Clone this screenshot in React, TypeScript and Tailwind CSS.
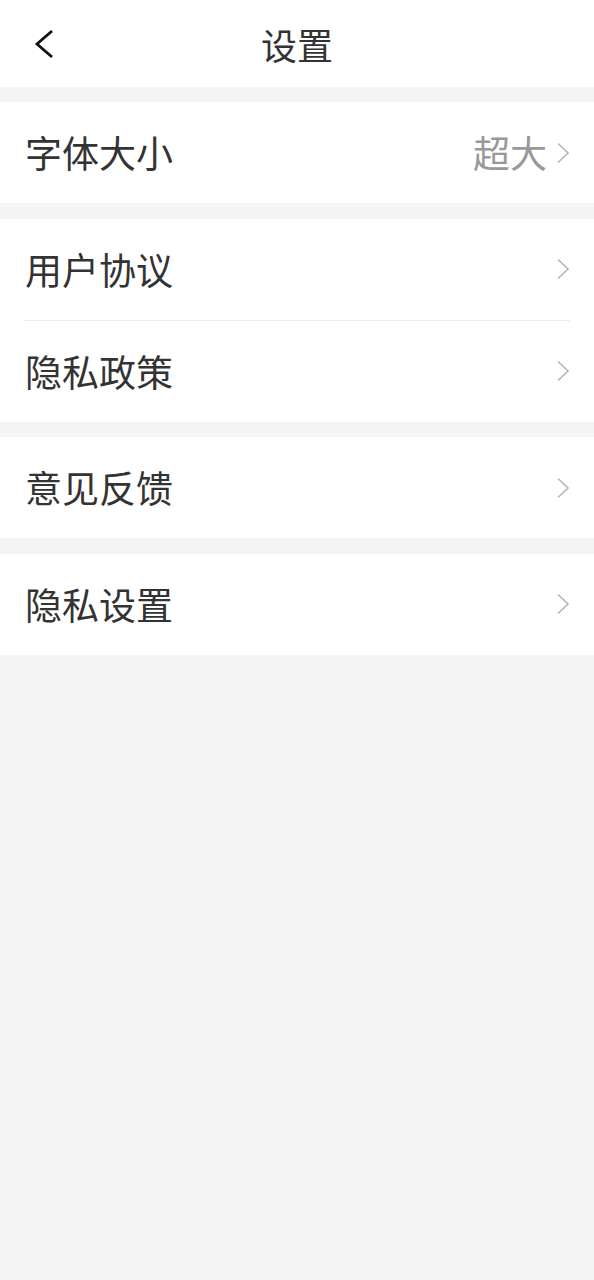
const font = { fontFamily: '"Noto Sans CJK SC", "Noto Sans", sans-serif' };

function Chevron() {
  return (
    <svg width="14" height="22" viewBox="0 0 14 22" className="shrink-0">
      <path d="M2 1.5 L12 11 L2 20.5" fill="none" stroke="#b5b5b5" strokeWidth="1.6" />
    </svg>
  );
}

type Item = { label: string; value?: string };

function Row({ item }: { item: Item }) {
  return (
    <div className="flex h-[101px] items-center justify-between bg-white pl-[25px] pr-[24px]">
      <span className="text-[37px] leading-none text-[#333333]">{item.label}</span>
      <div className="flex items-center gap-[9px]">
        {item.value && (
          <span className="text-[37px] leading-none text-[#999999]">{item.value}</span>
        )}
        <Chevron />
      </div>
    </div>
  );
}

const groups: Item[][] = [
  [{ label: "字体大小", value: "超大" }],
  [{ label: "用户协议" }, { label: "隐私政策" }],
  [{ label: "意见反馈" }],
  [{ label: "隐私设置" }],
];

export default function App() {
  return (
    <div className="min-h-[1280px] w-full bg-[#f4f4f4]" style={font}>
      <header className="relative flex h-[87px] items-center justify-center bg-white">
        <button className="absolute left-[33px] top-[29px]">
          <svg width="22" height="30" viewBox="0 0 22 30">
            <path d="M19 2 L4 15 L19 28" fill="none" stroke="#111111" strokeWidth="2.8" />
          </svg>
        </button>
        <h1 className="text-[36px] leading-none text-[#333333]">设置</h1>
      </header>
      <div className="flex flex-col gap-[15.5px] pt-[15px]">
        {groups.map((g, i) => (
          <section key={i} className="flex flex-col">
            {g.map((item, j) => (
              <div key={item.label}>
                {j > 0 && (
                  <div className="bg-white px-[24px]">
                    <div className="h-px bg-[#ececec]" />
                  </div>
                )}
                <Row item={item} />
              </div>
            ))}
          </section>
        ))}
      </div>
    </div>
  );
}
